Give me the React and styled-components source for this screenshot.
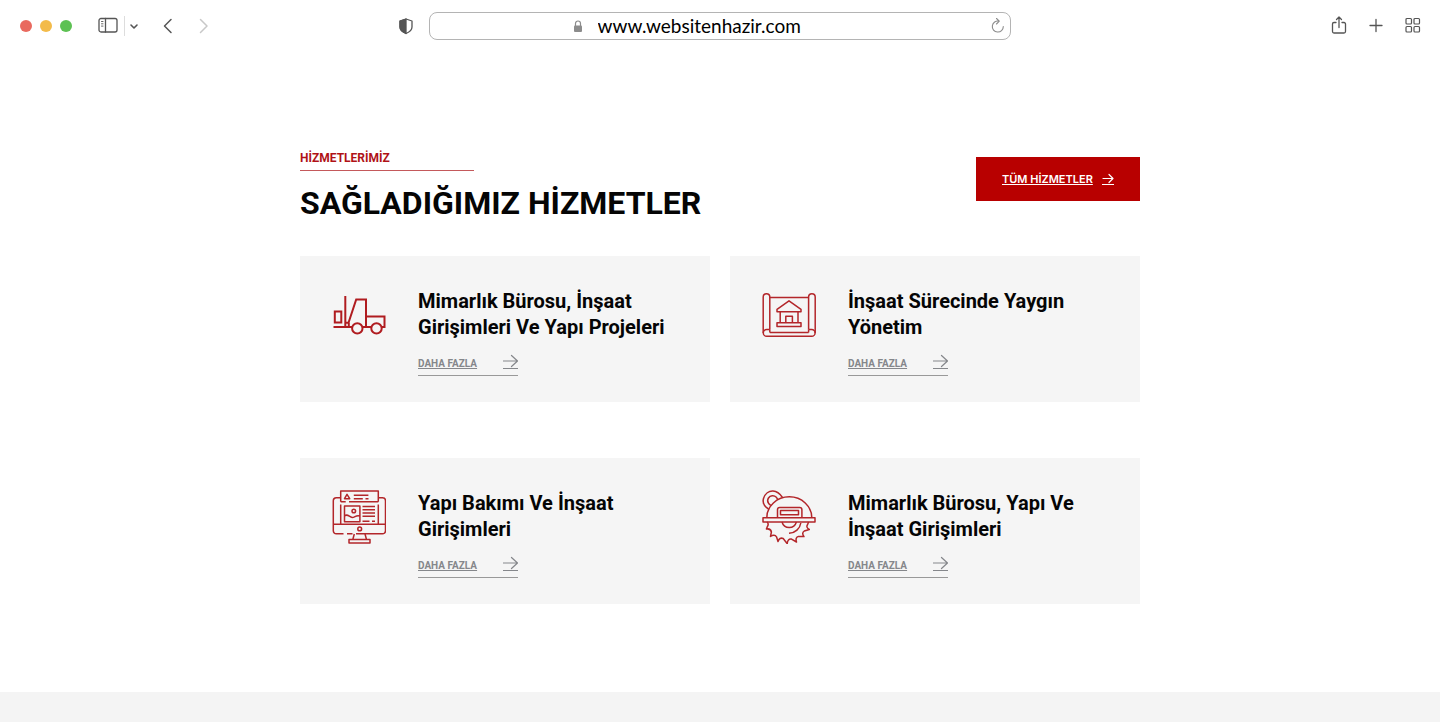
import React from 'react'
import styled, { createGlobalStyle } from 'styled-components'

const GlobalStyle = createGlobalStyle`
    * {
        box-sizing: border-box;
    }

    body {
        margin: 0;
        background-color: #fff;
        color: #050505;
        font-family: Roboto, "Liberation Sans", sans-serif;
    }

    svg {
        display: block;
        flex-shrink: 0;
    }
`

const Toolbar = styled.header`
    height: 52px;
    display: grid;
    grid-template-columns: 1fr minmax(0, 582px) 1fr;
    align-items: center;
`

const ToolbarSide = styled.div`
    display: flex;
    align-items: center;
    justify-content: ${props => props.$end ? 'flex-end' : 'flex-start'};
    gap: ${props => props.$end ? '17px' : '0'};
    padding: ${props => props.$end ? '0 17px 0 0' : '0 15px 0 20px'};
`

const Lights = styled.div`
    display: flex;
    gap: 8px;
    margin-right: 26px;
`

const Light = styled.span`
    width: 12px;
    height: 12px;
    border-radius: 50%;
    background-color: ${props => props.color};
`

const IconButton = styled.button`
    display: flex;
    align-items: center;
    justify-content: center;
    width: ${props => props.$width || 20}px;
    height: 20px;
    padding: 0;
    border: 0;
    background: none;
    color: ${props => props.$color || '#555'};
    cursor: pointer;
`

const Separator = styled.span`
    width: 1px;
    height: 20px;
    margin-left: 6px;
    background-color: #ddd;
`

const Spacer = styled.span`
    width: ${props => props.$grow ? 'auto' : '16px'};
    flex-grow: ${props => props.$grow ? 1 : 0};
`

const AddressBar = styled.form`
    height: 28px;
    display: flex;
    align-items: center;
    padding: 0 2px 0 24.5%;
    border: 1px solid #b4b4b4;
    border-radius: 8px;
`

const AddressInput = styled.input`
    flex: 1;
    min-width: 0;
    height: 24px;
    margin: 0 0 2px 15px;
    padding: 0;
    border: 0;
    outline: 0;
    background: none;
    color: #000;
    font-family: Lato, sans-serif;
    font-size: 19px;
`

const Section = styled.main`
    max-width: 840px;
    margin: 0 auto;
    padding: 98px 0 88px;
`

const SectionHead = styled.div`
    display: flex;
    justify-content: space-between;
    align-items: flex-start;
    margin-bottom: 33px;
`

const Eyebrow = styled.p`
    width: 174px;
    margin: 0 0 12px;
    padding-bottom: 4px;
    border-bottom: 1px solid #c4595b;
    color: #b01217;
    font-size: 12px;
    font-weight: bold;
    line-height: 16px;
`

const Heading = styled.h1`
    margin: 0;
    font-size: 32px;
    font-weight: bold;
    line-height: 40px;
`

const AllLink = styled.a`
    display: flex;
    align-items: center;
    justify-content: space-between;
    width: 164px;
    height: 44px;
    margin-top: 7px;
    padding: 0 26px;
    background-color: #b80000;
    color: #fff;
    font-family: Inter, sans-serif;
    font-size: 11px;
    font-weight: 600;
`

const Cards = styled.div`
    display: grid;
    grid-template-columns: 1fr 1fr;
    gap: 56px 20px;
`

const Card = styled.article`
    display: flex;
    gap: 32px;
    padding: 32px 32px 26px;
    background-color: #f5f5f5;
`

const CardTitle = styled.h2`
    margin: 0 0 12px;
    font-size: 20px;
    font-weight: bold;
    line-height: 26px;
`

const MoreLink = styled.a`
    display: flex;
    align-items: center;
    justify-content: space-between;
    width: 100px;
    height: 24px;
    border-bottom: 1px solid #999;
    color: #85878b;
    font-size: 10px;
    font-weight: bold;
`

const Footer = styled.footer`
    height: 30px;
    background-color: #f4f4f4;
`

const Art = ({ children }) => (
    <svg width="54" height="54" viewBox="0 0 54 54" fill="none" stroke="#b3262a" strokeWidth="1.5" strokeLinejoin="round" aria-hidden="true">
        {children}
    </svg>
)

const Glyph = ({ width = 20, height = 20, stroke = 1.3, children }) => (
    <svg width={width} height={height} viewBox={`0 0 ${width} ${height}`} fill="none" stroke="currentColor" strokeWidth={stroke} strokeLinecap="round" strokeLinejoin="round" aria-hidden="true">
        {children}
    </svg>
)

const Forklift = () => (
    <Art>
        <g stroke="#b01c20" strokeWidth="2" strokeLinejoin="miter">
            <path d="M13.3 8v31" />
            <path d="M2.8 23.5h6.5v11H2.8z" />
            <path d="M1.5 39h18.5M13.3 34.8h3.2L24.2 11.5h9.8V38M16.8 34.8V39" />
            <path d="M34 28.5h18.5V39h-3M30.5 39h8.5" />
            <circle cx="25.3" cy="40.4" r="5.2" />
            <circle cx="44.5" cy="40.4" r="5.2" />
        </g>
    </Art>
)

const Blueprint = () => (
    <Art>
        <path d="M1.2 45V9a3.2 3.2 0 0 1 6.6 0v32.5M46.6 41.5V9a3.2 3.2 0 0 1 6.6 0v36" />
        <path d="M7.8 9.5h38.8M7.8 44.5h38.8M7.8 41.5H4.7a3.4 3.4 0 0 0 0 6.8h45a3.4 3.4 0 0 0 0-6.8h-3.1M7.8 41.5v3M46.6 41.5v3" />
        <path d="M15 21.4l12-8.6 12 8.6v2.4H15zM18.2 23.8v11M36 23.8v11M15 34.8h24v3.8H15zM23.8 34.8v-6.5h6.6v6.5" />
    </Art>
)

const Monitor = () => (
    <Art>
        <path d="M8.7 11.8V1h37.6v10.8M5 7.8h3.7M46.3 7.8h4.2a3 3 0 0 1 3 3v30a3 3 0 0 1-3 3H24M20.5 43.8H15M11.5 43.8H4.3a3 3 0 0 1-3-3v-30a3 3 0 0 1 3-3h1" />
        <path d="M8.7 11.8h5M17 11.8h29.3M8.7 14.5v19.8M46.3 14.5v19.8M1.3 34.3h52.2" />
        <path d="M15 4.3l-2.5 4.4h5.2zM21.8 5.3h14.6M21.8 8.7h9M33.5 8.7h3" />
        <path d="M12.5 16h15.4v15.7H12.5zM12.5 26c3-3 5 1.5 7.7 1.5s4-3 7.7-1.5" />
        <circle cx="21.8" cy="21" r="1.8" />
        <path d="M30.5 16.4H43M30.5 19.7H43M30.5 23H43M30.5 26.3H43M30.5 31.2h7M40 31.2h3" />
        <circle cx="27.7" cy="38.9" r="1.9" />
        <path d="M22.3 44l-1.5 5.5M33 44l1.5 5.5M17 49.5h21V53H17z" />
    </Art>
)

const Saw = () => (
    <Art>
        <path d="M1 27.8h52V32H1zM4.8 27.8a22.5 21 0 0 1 45 0" />
        <path d="M15.5 27.8v-8a2.2 2.2 0 0 1 2.2-2.2h20a2.2 2.2 0 0 1 2.2 2.2v8M18.5 20.5h18v4.2h-18z" />
        <path d="M6.5 19C1.8 16 .5 12 1.5 8.5 3 3.5 7 .8 11 1c4.5.2 7.5 3.5 9.5 6.5M9 15.5C6 13.5 5 10.5 6.5 8c1.7-2.7 5.5-3.2 7.8-.8l1.7 2.6" />
        <path d="M5 32c1.2 1 1.5 3 .2 5l-.8 2c2.8-.5 4.6.8 5 3l-.9 4.5c2.5-1.8 4.8-1.5 6 .3l1.5 4.7c1-3 2.8-4 5.2-3l4 5.2c.2-3.5 1.800-5 4.300-4.600l5 2.900c-1-3-.2-5 2-5.600l5.500.2c-2-2.500-1.500-4.400.3-5.600l5-1.500c-2.500-1.500-3-3.200-1.700-5l1-2.500" />
        <path d="M20 32c1 3.400 4 5.500 7.200 5.500s6.200-2.100 7.200-5.500M38.800 33c-.8 5.500-5.500 10-11.800 10.300" />
    </Art>
)

const Arrow = () => (
    <Glyph width={15} height={20} stroke={1.2}>
        <path d="M0.5 7h14M8.5 1.5l6 5.5-6 5.500" />
        <path d="M0 14.500h15" strokeWidth="1" strokeLinecap="butt" />
    </Glyph>
)

const SmallArrow = () => (
    <Glyph width={12} height={12} stroke={1.2}>
        <path d="M1 5.5h10M7 1.5l4 4-4 4" />
        <path d="M0 11.5h12" strokeWidth="1" strokeLinecap="butt" />
    </Glyph>
)

const services = [
    { id: 1, title: 'Mimarlık Bürosu, İnşaat Girişimleri Ve Yapı Projeleri', icon: Forklift },
    { id: 2, title: 'İnşaat Sürecinde Yaygın Yönetim', icon: Blueprint },
    { id: 3, title: 'Yapı Bakımı Ve İnşaat Girişimleri', icon: Monitor },
    { id: 4, title: 'Mimarlık Bürosu, Yapı Ve İnşaat Girişimleri', icon: Saw }
]

const Browser = () => (
    <Toolbar>
        <ToolbarSide>
            <Lights>
                <Light color="#e96a5f" />
                <Light color="#f3bb4a" />
                <Light color="#5dc153" />
            </Lights>
            <IconButton aria-label="Kenar çubuğu">
                <Glyph>
                    <rect x="1" y="2.5" width="18" height="13.5" rx="2" />
                    <path d="M7.5 2.5v13.5" />
                    <path d="M3.5 5.5h1.5M3.5 7.8h1.5M3.5 10.1h1.5" strokeWidth="0.9" />
                </Glyph>
            </IconButton>
            <Separator />
            <IconButton aria-label="Sekme grupları">
                <Glyph stroke={1.6}><path d="M6 9l3 3 3-3" /></Glyph>
            </IconButton>
            <Spacer />
            <IconButton aria-label="Geri" $width={16}>
                <Glyph width={16} stroke={1.5}><path d="M10 3.5L3.5 10l6.5 6.5" /></Glyph>
            </IconButton>
            <Spacer />
            <IconButton aria-label="İleri" $width={20} $color="#c8c8c8">
                <Glyph width={16} stroke={1.5}><path d="M5.5 3.5L12 10l-6.5 6.5" /></Glyph>
            </IconButton>
            <Spacer $grow />
            <IconButton aria-label="Gizlilik raporu" $width={16}>
                <Glyph width={16} stroke={1.3}>
                    <path d="M8 3l6 2v6c0 3-2.5 5-6 6.5C4.5 16 2 14 2 11V5z" />
                    <path d="M8 3v14.5C4.5 16 2 14 2 11V5z" fill="currentColor" />
                </Glyph>
            </IconButton>
        </ToolbarSide>
        <AddressBar onSubmit={e => e.preventDefault()}>
            <svg width="10" height="14" viewBox="0 0 10 14" fill="none" stroke="#8c8c8c" aria-hidden="true">
                <path d="M2.5 7V4.5a2.5 2.5 0 0 1 5 0V7" strokeWidth="1.2" />
                <rect x="1" y="6.5" width="8" height="6.5" rx="1" fill="#8c8c8c" stroke="none" />
            </svg>
            <AddressInput aria-label="Adres" defaultValue="www.websitenhazir.com" />
            <IconButton type="button" aria-label="Yenile" $color="#8c8c8c">
                <Glyph stroke={1.1}>
                    <path d="M11 5.2a5.5 5.5 0 1 0 4.3 5.3M8.5 2.5L11.3 5.2 8.5 8" />
                </Glyph>
            </IconButton>
        </AddressBar>
        <ToolbarSide $end>
            <IconButton aria-label="Paylaş">
                <Glyph>
                    <path d="M7 6.5H5A1.5 1.5 0 0 0 3.5 8v7.5A1.5 1.5 0 0 0 5 17h10a1.5 1.5 0 0 0 1.5-1.5V8A1.5 1.5 0 0 0 15 6.5h-2M10 11.5V1M7.5 3.5L10 1l2.5 2.5" />
                </Glyph>
            </IconButton>
            <IconButton aria-label="Yeni sekme">
                <Glyph><path d="M10 3.5v12M4 9.5h12" /></Glyph>
            </IconButton>
            <IconButton aria-label="Sekmeler">
                <Glyph stroke={1.2}>
                    <rect x="3" y="2.5" width="5.5" height="5.5" rx="1" />
                    <rect x="11" y="2.5" width="5.5" height="5.5" rx="1" />
                    <rect x="3" y="10.5" width="5.5" height="5.5" rx="1" />
                    <rect x="11" y="10.5" width="5.5" height="5.5" rx="1" />
                </Glyph>
            </IconButton>
        </ToolbarSide>
    </Toolbar>
)

export default function App() {
    return (
        <>
            <GlobalStyle />
            <Browser />
            <Section>
                <SectionHead>
                    <div>
                        <Eyebrow>HİZMETLERİMİZ</Eyebrow>
                        <Heading>SAĞLADIĞIMIZ HİZMETLER</Heading>
                    </div>
                    <AllLink href="#hizmetler">TÜM HİZMETLER <SmallArrow /></AllLink>
                </SectionHead>
                <Cards>
                    {services.map(({ id, title, icon: Icon }) => (
                        <Card key={id}>
                            <Icon />
                            <div>
                                <CardTitle>{title}</CardTitle>
                                <MoreLink href={`#hizmet-${id}`}>DAHA FAZLA <Arrow /></MoreLink>
                            </div>
                        </Card>
                    ))}
                </Cards>
            </Section>
            <Footer />
        </>
    )
}
